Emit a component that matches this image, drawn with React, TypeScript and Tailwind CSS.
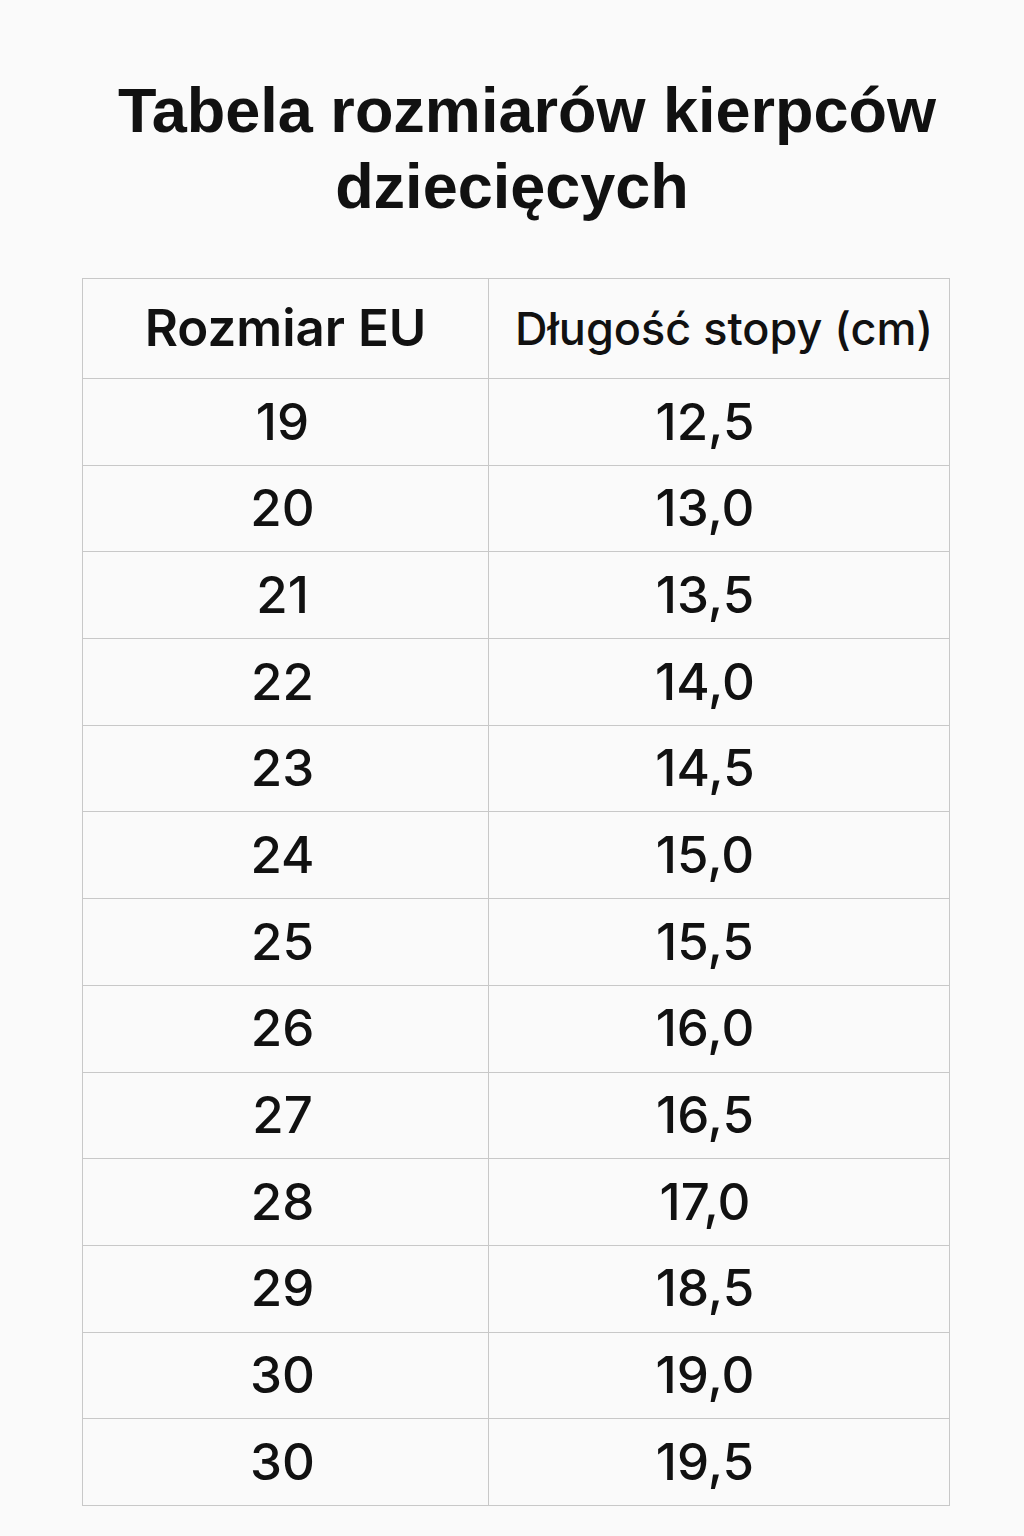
import React from "react";

const rows = [
  ["19", "12,5"],
  ["20", "13,0"],
  ["21", "13,5"],
  ["22", "14,0"],
  ["23", "14,5"],
  ["24", "15,0"],
  ["25", "15,5"],
  ["26", "16,0"],
  ["27", "16,5"],
  ["28", "17,0"],
  ["29", "18,5"],
  ["30", "19,0"],
  ["30", "19,5"],
];

const App = () => {
  return (
    <div className="w-[1024px] h-[1536px] bg-[#fafafa] text-[#111]">
      <h1 className="pt-[72px] text-center font-bold text-[63px] leading-[76px] [font-family:'Liberation_Sans',Arial,sans-serif]">
        <span className="block pl-[30px]">Tabela rozmiarów kierpców</span>
        <span className="block">dziecięcych</span>
      </h1>

      <table className="mt-[54px] ml-[82px] w-[868px] border-collapse [font-family:Inter,sans-serif]">
        <thead>
          <tr className="h-[100px]">
            <th className="w-[406px] border border-[#c8c8c8] text-[51px] font-semibold text-center">
              Rozmiar EU
            </th>
            <th className="border border-[#c8c8c8] text-[45px] font-medium text-center pl-[10px]">
              Długość stopy (cm)
            </th>
          </tr>
        </thead>
        <tbody>
          {rows.map((row, index) => (
            <tr key={index} className="h-[86.7px]">
              <td className="border border-[#c8c8c8] text-[51px] font-medium text-center pr-[6px]">{row[0]}</td>
              <td className="border border-[#c8c8c8] text-[51px] font-medium text-center pr-[28px]">{row[1]}</td>
            </tr>
          ))}
        </tbody>
      </table>
    </div>
  );
};

export default App;
